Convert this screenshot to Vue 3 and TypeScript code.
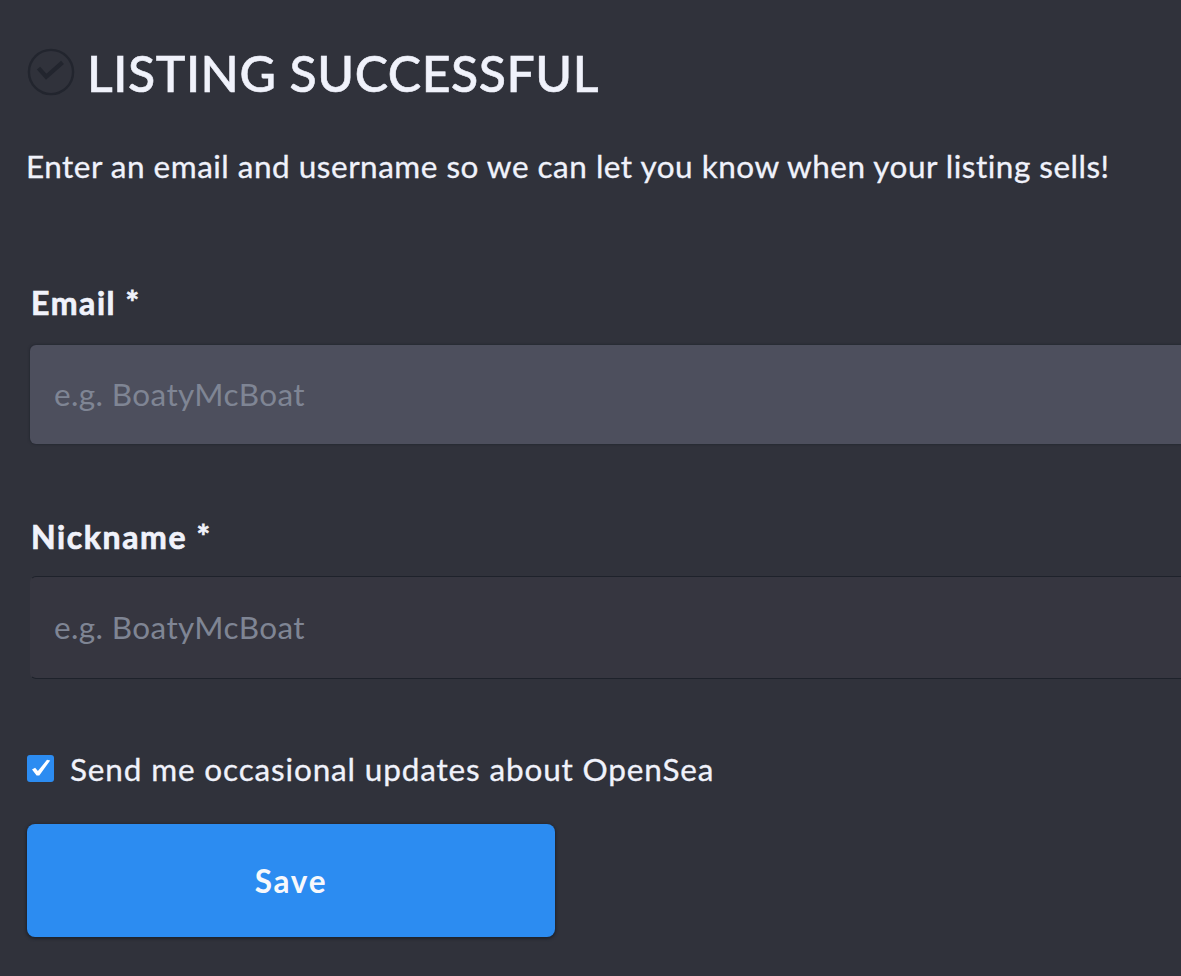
<script setup lang="ts">
import { ref } from 'vue'

interface Field {
  id: string
  label: string
  placeholder: string
  active: boolean
}

const fields: Field[] = [
  { id: 'email', label: 'Email *', placeholder: 'e.g. BoatyMcBoat', active: true },
  { id: 'nickname', label: 'Nickname *', placeholder: 'e.g. BoatyMcBoat', active: false },
]
const values = ref<Record<string, string>>({ email: '', nickname: '' })
const updates = ref(true)
</script>

<template>
  <main class="page">
    <header class="heading">
      <svg class="status" viewBox="0 0 50 50" aria-hidden="true">
        <circle cx="25" cy="25" r="23" />
        <path d="M12 21l8 9 17-15" />
      </svg>
      <h1>LISTING SUCCESSFUL</h1>
    </header>
    <p class="intro">Enter an email and username so we can let you know when your listing sells!</p>
    <form @submit.prevent>
      <div v-for="f in fields" :key="f.id" class="field">
        <label :for="f.id">{{ f.label }}</label>
        <input :id="f.id" v-model="values[f.id]" type="text" :placeholder="f.placeholder" :class="{ active: f.active }" />
      </div>
      <label class="updates">
        <input v-model="updates" type="checkbox" />
        <span class="box">
          <svg v-if="updates" viewBox="0 0 27 27" aria-hidden="true">
            <path d="M5 14.4l3.1-1.7 2.8 3.4L20 4.8l3.2.6L12.3 20.5H9.6z" />
          </svg>
        </span>
        <span class="updates-text">Send me occasional updates about OpenSea</span>
      </label>
      <button type="submit">Save</button>
    </form>
  </main>
</template>

<style>
body {
  background: #30323b;
}
</style>

<style scoped>
.page {
  box-sizing: border-box;
  width: 100%;
  height: 976px;
  padding: 42px 0 0 27px;
  overflow: hidden;
  background: #30323b;
  color: #f0f2fb;
  font-family: Lato, "Liberation Sans", sans-serif;
}
.heading {
  display: flex;
  align-items: center;
  height: 64px;
}
.status {
  flex: none;
  width: 48px;
  height: 48px;
  margin-top: -5px;
  fill: none;
  stroke: #22252e;
  stroke-width: 2.5;
}
.status path {
  stroke-width: 4.5;
}
h1 {
  margin: -2px 0 0 12px;
  font-size: 50px;
  font-weight: 500;
  line-height: 64px;
  letter-spacing: 0.52px;
  white-space: nowrap;
  -webkit-text-stroke: 0.6px #f0f2fb;
}
.intro {
  margin: 40px 0 0 -1px;
  font-size: 31.5px;
  line-height: 40px;
  letter-spacing: 0.5px;
  white-space: nowrap;
  -webkit-text-stroke: 0.3px #f0f2fb;
}
form {
  display: flex;
  flex-direction: column;
  align-items: flex-start;
  margin-top: 97px;
}
.field {
  display: flex;
  flex-direction: column;
  width: 100%;
  height: 234px;
}
.field label {
  margin-left: 4px;
  font-size: 32px;
  font-weight: 700;
  line-height: 40px;
  letter-spacing: 1.6px;
  -webkit-text-stroke: 0.7px #f0f2fb;
}
.field input {
  box-sizing: border-box;
  height: 103px;
  margin: 19px -20px 0 3px;
  padding: 0 23px 2px;
  border: 1px solid #1e222b;
  border-color: #1e222b transparent;
  border-radius: 6px;
  outline: none;
  background: #363640;
  color: #f0f2fb;
  font: 400 31.5px Lato, "Liberation Sans", sans-serif;
  letter-spacing: 0.38px;
}
.field input.active {
  height: 99px;
  margin-top: 22px;
  padding-left: 24px;
  border: 0;
  background: #4d4f5d;
  box-shadow: 0 0 2px 1px #272a33;
}
.field input::placeholder {
  color: #7f8594;
  opacity: 1;
}
.updates {
  display: flex;
  align-items: center;
  height: 40px;
  margin-top: -3px;
  font-size: 31.5px;
}
.updates input {
  position: absolute;
  opacity: 0;
}
.box {
  flex: none;
  width: 27px;
  height: 27px;
  border-radius: 3px;
  background: #2c8cf1;
}
.box svg {
  display: block;
  fill: #fff;
}
.updates-text {
  margin-left: 16px;
  padding-top: 2px;
  letter-spacing: 0.85px;
  white-space: nowrap;
  -webkit-text-stroke: 0.3px #f0f2fb;
}
button {
  width: 528px;
  height: 113px;
  margin-top: 36px;
  padding: 0;
  border: 0;
  border-radius: 8px;
  background: #2c8cf1;
  box-shadow: 0 1px 3px 1px #1d222c;
  color: #f7f8fc;
  font: 700 31.5px Lato, "Liberation Sans", sans-serif;
  letter-spacing: 1.7px;
}
</style>
